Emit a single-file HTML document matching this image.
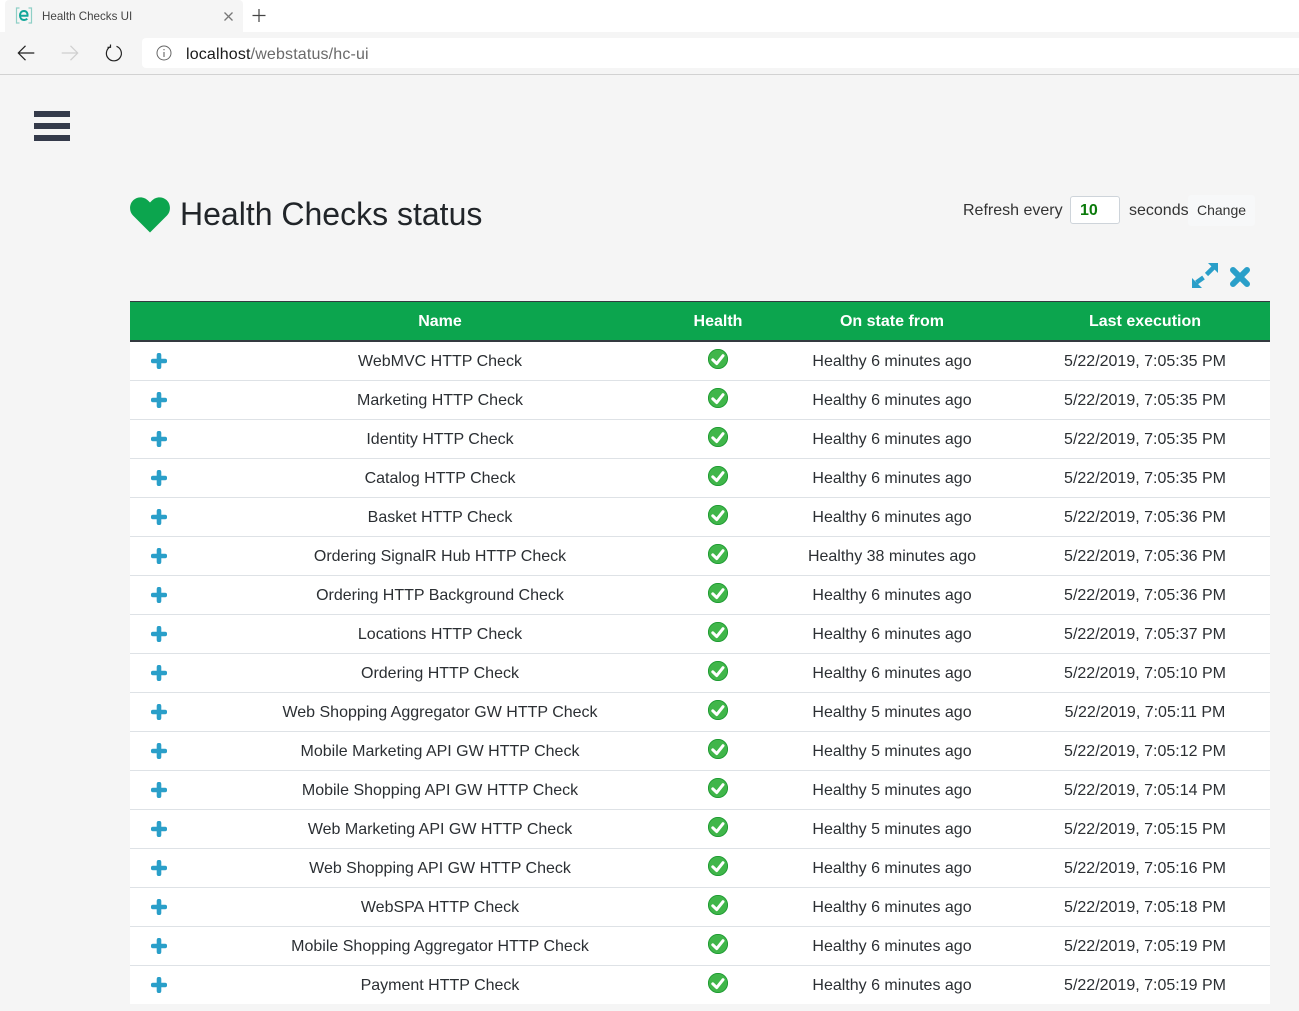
<!DOCTYPE html>
<html lang="en"><head><meta charset="utf-8"><title>Health Checks UI</title>
<style>
html,body{margin:0;padding:0;width:1299px;height:1011px;overflow:hidden;background:#f5f5f5;font-family:"Liberation Sans",Arial,sans-serif;color:#212529;}
.a{position:absolute}
#tabbar{left:0;top:0;width:1299px;height:32px;background:#fff}
#tab{left:5px;top:0;width:238px;height:32px;background:#f5f5f5;border-radius:4px 4px 0 0}
#tabtxt{left:42px;top:9px;font-size:11.6px;line-height:16px;color:#444}
#nav{left:0;top:32px;width:1299px;height:42px;background:#f5f5f5;border-bottom:1px solid #d2d2d2}
#url{left:142px;top:38px;width:1157px;height:30px;background:#fff;border-radius:4px 0 0 4px}
#urltxt{left:186px;top:45px;font-size:16px;letter-spacing:.16px;line-height:19px;color:#6a6a6a;white-space:nowrap}
#urltxt b{font-weight:normal;color:#1a1a1a}
.bar{left:34px;width:36px;height:6px;background:#343a4a}
h1{position:absolute;margin:0;left:180px;top:195px;font-size:32px;line-height:38px;font-weight:normal;color:#212529;white-space:nowrap}
#ref{left:963px;top:201px;font-size:16px;line-height:19px;color:#333;white-space:nowrap}
#sec{left:1129px;top:201px;font-size:16px;line-height:19px;color:#333;white-space:nowrap}
#inp{left:1070px;top:196px;width:48px;height:26px;background:#fff;border:1px solid #ced4da;border-radius:3px}
#ten{left:1080px;top:201px;font-size:16px;line-height:19px;font-weight:bold;color:#0a7a0a}
#chg{left:1188px;top:195px;width:67px;height:31px;background:#f7f8f9;border-radius:3px;text-align:center;font-size:14px;line-height:31px;color:#333}
#thead{left:130px;top:301px;width:1140px;height:38px;background:#0ca54e;border-top:1px solid #343a40;border-bottom:2px solid #343a40}
.r{position:absolute;left:130px;width:1140px;height:38px;background:#fff;border-bottom:1px solid #dee2e6;font-size:16px;line-height:40px;color:#2b2f33}
.c{position:absolute;top:0;text-align:center;white-space:nowrap}
.n{left:60px;width:500px}.h{left:538px;width:100px}.s{left:662px;width:200px}.l{left:905px;width:220px}
#thead .c{color:#fff;font-weight:bold;font-size:16px;line-height:40px}
.p{position:absolute;left:21px;top:11px;width:16px;height:16px}
.k{position:absolute;left:578px;top:7px;width:20px;height:20px}
</style></head><body>
<svg width="0" height="0" style="position:absolute"><defs>
<symbol id="plus" viewBox="0 0 16 16"><path d="M8 2V14M2 8H14" stroke="#2a9fc9" stroke-width="4.600" stroke-linecap="round" fill="none"/></symbol>
<symbol id="chk" viewBox="0 0 20 20"><circle cx="10" cy="10" r="9.600" fill="#40b64a" stroke="#1c9a30" stroke-width=".9"/><path d="M4.800 10.800L8.700 14.600L15 6.700" stroke="#fff" stroke-width="3" fill="none" stroke-linejoin="round" stroke-linecap="round"/></symbol>
</defs></svg>

<div class="a" id="tabbar"></div><div class="a" id="tab"></div>
<svg class="a" style="left:15px;top:7px" width="18" height="17" viewBox="0 0 18 17"><path d="M4.500 1H1.500V16H4.500M13.500 1H16.500V16H13.500" stroke="#8fcfc6" stroke-width="1.200" fill="none"/><path d="M5.500 8.700H12.500C12.800 5.800 11.200 4 9 4C6.500 4 5 6 5 8.500C5 11 6.500 13 9.200 13C10.500 13 11.500 12.500 12.300 11.800" stroke="#14a79a" stroke-width="2" fill="none"/></svg>
<div class="a" id="tabtxt">Health Checks UI</div>
<svg class="a" style="left:223px;top:11px" width="11" height="11" viewBox="0 0 11 11"><path d="M1.500 1.500L9.500 9.500M9.500 1.500L1.500 9.500" stroke="#777" stroke-width="1.300"/></svg>
<svg class="a" style="left:252px;top:9px" width="14" height="14" viewBox="0 0 14 14"><path d="M7 0V13M.5 6.500H13.500" stroke="#444" stroke-width="1.200"/></svg>
<div class="a" id="nav"></div><div class="a" id="url"></div>
<svg class="a" style="left:17px;top:44px" width="18" height="18" viewBox="0 0 18 18"><path d="M17.300 9H1.500M8.500 1.800L1.300 9L8.500 16.200" stroke="#222" stroke-width="1.200" fill="none"/></svg>
<svg class="a" style="left:61px;top:44px" width="18" height="18" viewBox="0 0 18 18"><path d="M.7 9H16.500M9.500 1.800L16.700 9L9.500 16.200" stroke="#cfcfcf" stroke-width="1.200" fill="none"/></svg>
<svg class="a" style="left:105px;top:44px" width="18" height="18" viewBox="0 0 18 18"><path d="M5.200 2.800A7.500 7.500 0 1 0 11.500 2.300M5.500 .5V3.300H2.500" stroke="#222" stroke-width="1.200" fill="none"/></svg>
<svg class="a" style="left:156px;top:45px" width="16" height="16" viewBox="0 0 16 16"><circle cx="8" cy="8" r="7" stroke="#666" stroke-width="1" fill="none"/><path d="M8 7V12M8 4V5.300" stroke="#666" stroke-width="1.100"/></svg>
<div class="a" id="urltxt"><b>localhost</b>/webstatus/hc-ui</div>

<div class="a bar" style="top:111px"></div><div class="a bar" style="top:123px"></div><div class="a bar" style="top:135px"></div>

<svg class="a" style="left:130px;top:197px" width="40" height="36" viewBox="0 0 40 36"><path d="M20 35.500L3 18.500C-1 14.500-1 7 3.500 3C8 -1 14.500 -.2 18 3.500L20 5.500L22 3.500C25.500 -.2 32 -1 36.500 3C41 7 41 14.500 37 18.500Z" fill="#0ca54e"/></svg>
<h1>Health Checks status</h1>
<div class="a" id="ref">Refresh every</div>
<div class="a" id="inp"></div><div class="a" id="ten">10</div>
<div class="a" id="sec">seconds</div>
<div class="a" id="chg">Change</div>

<svg class="a" style="left:1191px;top:262px" width="28" height="28" viewBox="0 0 28 28"><path d="M17 1H27V11ZM1 16V26H11Z" fill="#2a9fc9"/><path d="M22.500 5.500L15.500 12.500M5.500 20.500L12.500 15.500" stroke="#2a9fc9" stroke-width="4.500" fill="none"/></svg>
<svg class="a" style="left:1229px;top:266px" width="22" height="22" viewBox="0 0 22 22"><path d="M4 4L18 18M18 4L4 18" stroke="#2a9fc9" stroke-width="6" stroke-linecap="round"/></svg>

<div class="a" id="thead">
<div class="c n">Name</div><div class="c h">Health</div><div class="c s">On state from</div><div class="c l">Last execution</div>
</div>

<div class="r" style="top:342px"><svg class="p"><use href="#plus"/></svg><div class="c n">WebMVC HTTP Check</div><svg class="k"><use href="#chk"/></svg><div class="c s">Healthy 6 minutes ago</div><div class="c l">5/22/2019, 7:05:35 PM</div></div>
<div class="r" style="top:381px"><svg class="p"><use href="#plus"/></svg><div class="c n">Marketing HTTP Check</div><svg class="k"><use href="#chk"/></svg><div class="c s">Healthy 6 minutes ago</div><div class="c l">5/22/2019, 7:05:35 PM</div></div>
<div class="r" style="top:420px"><svg class="p"><use href="#plus"/></svg><div class="c n">Identity HTTP Check</div><svg class="k"><use href="#chk"/></svg><div class="c s">Healthy 6 minutes ago</div><div class="c l">5/22/2019, 7:05:35 PM</div></div>
<div class="r" style="top:459px"><svg class="p"><use href="#plus"/></svg><div class="c n">Catalog HTTP Check</div><svg class="k"><use href="#chk"/></svg><div class="c s">Healthy 6 minutes ago</div><div class="c l">5/22/2019, 7:05:35 PM</div></div>
<div class="r" style="top:498px"><svg class="p"><use href="#plus"/></svg><div class="c n">Basket HTTP Check</div><svg class="k"><use href="#chk"/></svg><div class="c s">Healthy 6 minutes ago</div><div class="c l">5/22/2019, 7:05:36 PM</div></div>
<div class="r" style="top:537px"><svg class="p"><use href="#plus"/></svg><div class="c n">Ordering SignalR Hub HTTP Check</div><svg class="k"><use href="#chk"/></svg><div class="c s">Healthy 38 minutes ago</div><div class="c l">5/22/2019, 7:05:36 PM</div></div>
<div class="r" style="top:576px"><svg class="p"><use href="#plus"/></svg><div class="c n">Ordering HTTP Background Check</div><svg class="k"><use href="#chk"/></svg><div class="c s">Healthy 6 minutes ago</div><div class="c l">5/22/2019, 7:05:36 PM</div></div>
<div class="r" style="top:615px"><svg class="p"><use href="#plus"/></svg><div class="c n">Locations HTTP Check</div><svg class="k"><use href="#chk"/></svg><div class="c s">Healthy 6 minutes ago</div><div class="c l">5/22/2019, 7:05:37 PM</div></div>
<div class="r" style="top:654px"><svg class="p"><use href="#plus"/></svg><div class="c n">Ordering HTTP Check</div><svg class="k"><use href="#chk"/></svg><div class="c s">Healthy 6 minutes ago</div><div class="c l">5/22/2019, 7:05:10 PM</div></div>
<div class="r" style="top:693px"><svg class="p"><use href="#plus"/></svg><div class="c n">Web Shopping Aggregator GW HTTP Check</div><svg class="k"><use href="#chk"/></svg><div class="c s">Healthy 5 minutes ago</div><div class="c l">5/22/2019, 7:05:11 PM</div></div>
<div class="r" style="top:732px"><svg class="p"><use href="#plus"/></svg><div class="c n">Mobile Marketing API GW HTTP Check</div><svg class="k"><use href="#chk"/></svg><div class="c s">Healthy 5 minutes ago</div><div class="c l">5/22/2019, 7:05:12 PM</div></div>
<div class="r" style="top:771px"><svg class="p"><use href="#plus"/></svg><div class="c n">Mobile Shopping API GW HTTP Check</div><svg class="k"><use href="#chk"/></svg><div class="c s">Healthy 5 minutes ago</div><div class="c l">5/22/2019, 7:05:14 PM</div></div>
<div class="r" style="top:810px"><svg class="p"><use href="#plus"/></svg><div class="c n">Web Marketing API GW HTTP Check</div><svg class="k"><use href="#chk"/></svg><div class="c s">Healthy 5 minutes ago</div><div class="c l">5/22/2019, 7:05:15 PM</div></div>
<div class="r" style="top:849px"><svg class="p"><use href="#plus"/></svg><div class="c n">Web Shopping API GW HTTP Check</div><svg class="k"><use href="#chk"/></svg><div class="c s">Healthy 6 minutes ago</div><div class="c l">5/22/2019, 7:05:16 PM</div></div>
<div class="r" style="top:888px"><svg class="p"><use href="#plus"/></svg><div class="c n">WebSPA HTTP Check</div><svg class="k"><use href="#chk"/></svg><div class="c s">Healthy 6 minutes ago</div><div class="c l">5/22/2019, 7:05:18 PM</div></div>
<div class="r" style="top:927px"><svg class="p"><use href="#plus"/></svg><div class="c n">Mobile Shopping Aggregator HTTP Check</div><svg class="k"><use href="#chk"/></svg><div class="c s">Healthy 6 minutes ago</div><div class="c l">5/22/2019, 7:05:19 PM</div></div>
<div class="r" style="top:966px;border-bottom:0"><svg class="p"><use href="#plus"/></svg><div class="c n">Payment HTTP Check</div><svg class="k"><use href="#chk"/></svg><div class="c s">Healthy 6 minutes ago</div><div class="c l">5/22/2019, 7:05:19 PM</div></div>
</body></html>
